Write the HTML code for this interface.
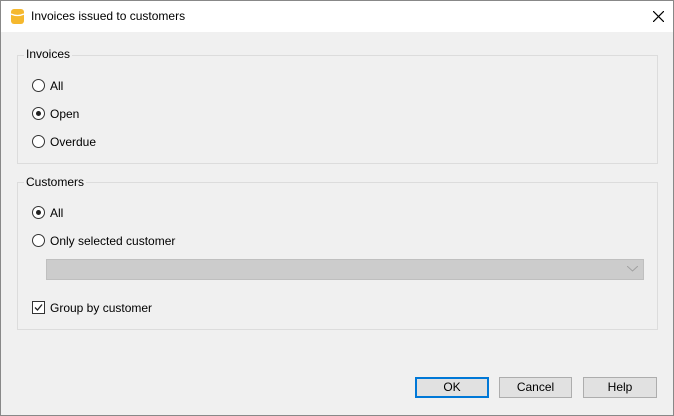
<!DOCTYPE html><html><head><style>
body{margin:0;width:674px;height:416px;overflow:hidden;font-family:"Liberation Sans",sans-serif;font-size:12px;color:#000}
.win{position:absolute;left:0;top:0;width:672px;height:414px;border:1px solid #888;background:#f0f0f0}
.title{position:absolute;left:0;top:0;width:672px;height:31px;background:#fff}
.abs{position:absolute}
.grp{position:absolute;border:1px solid #dcdcdc}
.lbl{position:absolute;background:#f0f0f0;padding:0 2px}
.rad{position:absolute;width:11px;height:11px;border:1px solid #333;border-radius:50%;background:#fff}
.rad.on::after{content:"";position:absolute;left:3px;top:3px;width:5px;height:5px;border-radius:50%;background:#222}
.btn{position:absolute;height:19px;border:1px solid #adadad;background:#e1e1e1;text-align:center;line-height:19px}
</style></head><body><div class="win">
<div class="title">
<svg class="abs" style="left:10px;top:8px" width="13" height="15"><rect x="0" y="0" width="13" height="15" rx="3" fill="#f5b82e"/><path d="M0 5 Q6.5 8 13 5" stroke="#fff" stroke-width="1.3" fill="none"/></svg>
<div class="abs" style="left:30px;top:8px">Invoices issued to customers</div>
<svg class="abs" style="left:652px;top:10px" width="11" height="11"><path d="M0 0L11 11M11 0L0 11" stroke="#000" stroke-width="1.2"/></svg>
</div>
<div class="grp" style="left:16px;top:54px;width:639px;height:107px"></div>
<div class="lbl" style="left:23px;top:46px">Invoices</div>
<div class="rad" style="left:31px;top:78px"></div><div class="abs" style="left:49px;top:78px">All</div>
<div class="rad on" style="left:31px;top:106px"></div><div class="abs" style="left:49px;top:106px">Open</div>
<div class="rad" style="left:31px;top:134px"></div><div class="abs" style="left:49px;top:134px">Overdue</div>
<div class="grp" style="left:16px;top:181px;width:639px;height:146px"></div>
<div class="lbl" style="left:23px;top:174px">Customers</div>
<div class="rad on" style="left:31px;top:205px"></div><div class="abs" style="left:49px;top:205px">All</div>
<div class="rad" style="left:31px;top:233px"></div><div class="abs" style="left:49px;top:233px">Only selected customer</div>
<div class="abs" style="left:45px;top:258px;width:596px;height:19px;background:#ccc;border:1px solid #bfbfbf"></div>
<svg class="abs" style="left:626px;top:265px" width="11" height="6"><path d="M0 0L5.5 5L11 0" stroke="#a0a0a0" fill="none"/></svg>
<div class="abs" style="left:31px;top:300px;width:11px;height:11px;border:1px solid #333;background:#fff"><svg width="11" height="11" style="display:block"><path d="M2 5.5L4.5 8L9 2.5" stroke="#222" stroke-width="1.3" fill="none"/></svg></div>
<div class="abs" style="left:49px;top:300px">Group by customer</div>
<div class="btn" style="left:414px;top:376px;width:70px;border:2px solid #0078d7;height:17px;line-height:17px">OK</div>
<div class="btn" style="left:498px;top:376px;width:71px">Cancel</div>
<div class="btn" style="left:582px;top:376px;width:72px">Help</div>
</div></body></html>
